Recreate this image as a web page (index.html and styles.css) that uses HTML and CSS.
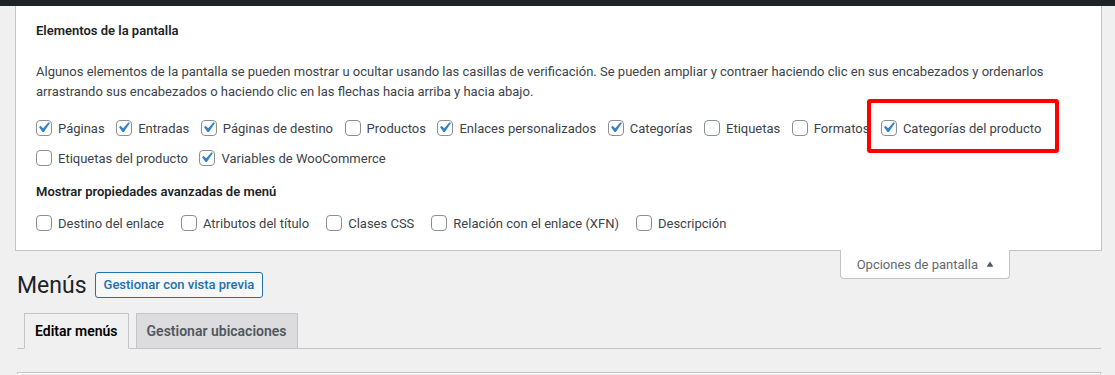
FILE: index.html
```html
<!DOCTYPE html>
<html lang="es">
<head>
    <meta charset="UTF-8">
    <meta name="viewport" content="width=device-width, initial-scale=1.0">
    <title>Menús</title>
    <link rel="stylesheet" href="styles.css">
</head>
<body>
    <div class="adminbar"></div>

    <!-- Screen options panel -->
    <div class="screen-options">
        <h5 class="prefs-title">Elementos de la pantalla</h5>
        <p class="prefs-help">Algunos elementos de la pantalla se pueden mostrar u ocultar usando las casillas de verificación. Se pueden ampliar y contraer haciendo clic en sus encabezados y ordenarlos arrastrando sus encabezados o haciendo clic en las flechas hacia arriba y hacia abajo.</p>

        <div class="prefs">
            <label><span class="cb checked"><svg viewBox="0 0 20 20"><path d="M14.83 4.89l1.34.94-5.81 8.38H9.02L5.78 9.67l1.34-1.25 2.57 2.4z"/></svg></span>Páginas</label>
            <label><span class="cb checked"><svg viewBox="0 0 20 20"><path d="M14.83 4.89l1.34.94-5.81 8.38H9.02L5.78 9.67l1.34-1.25 2.57 2.4z"/></svg></span>Entradas</label>
            <label><span class="cb checked"><svg viewBox="0 0 20 20"><path d="M14.83 4.89l1.34.94-5.81 8.38H9.02L5.78 9.67l1.34-1.25 2.57 2.4z"/></svg></span>Páginas de destino</label>
            <label><span class="cb"></span>Productos</label>
            <label><span class="cb checked"><svg viewBox="0 0 20 20"><path d="M14.83 4.89l1.34.94-5.81 8.38H9.02L5.78 9.67l1.34-1.25 2.57 2.4z"/></svg></span>Enlaces personalizados</label>
            <label><span class="cb checked"><svg viewBox="0 0 20 20"><path d="M14.83 4.89l1.34.94-5.81 8.38H9.02L5.78 9.67l1.34-1.25 2.57 2.4z"/></svg></span>Categorías</label>
            <label><span class="cb"></span>Etiquetas</label>
            <label><span class="cb"></span>Formatos</label>
            <label><span class="cb checked"><svg viewBox="0 0 20 20"><path d="M14.83 4.89l1.34.94-5.81 8.38H9.02L5.78 9.67l1.34-1.25 2.57 2.4z"/></svg></span>Categorías del producto</label>
            <label><span class="cb"></span>Etiquetas del producto</label>
            <label><span class="cb checked"><svg viewBox="0 0 20 20"><path d="M14.83 4.89l1.34.94-5.81 8.38H9.02L5.78 9.67l1.34-1.25 2.57 2.4z"/></svg></span>Variables de WooCommerce</label>
        </div>

        <h5 class="prefs-title advanced">Mostrar propiedades avanzadas de menú</h5>
        <div class="prefs advanced-prefs">
            <label><span class="cb"></span>Destino del enlace</label>
            <label><span class="cb"></span>Atributos del título</label>
            <label><span class="cb"></span>Clases CSS</label>
            <label><span class="cb"></span>Relación con el enlace (XFN)</label>
            <label><span class="cb"></span>Descripción</label>
        </div>
    </div>

    <div class="wrap">
        <div class="page-head">
            <div class="title-row">
                <h1>Menús</h1>
                <a class="page-title-action" href="#">Gestionar con vista previa</a>
            </div>
            <button class="show-settings" type="button">Opciones de pantalla
                <svg class="arrow" viewBox="0 0 10 8"><path d="M5 0.5L9.5 7.5H0.5z"/></svg>
            </button>
        </div>

        <div class="nav-tabs">
            <a class="nav-tab active" href="#">Editar menús</a>
            <a class="nav-tab" href="#">Gestionar ubicaciones</a>
        </div>

        <div class="menu-box"></div>
    </div>

    <!-- annotation -->
    <div class="highlight"></div>
</body>
</html>
```
FILE: styles.css
```css
body {
    font-family: Roboto, "Liberation Sans", sans-serif;
    font-size: 13px;
    color: #3c434a;
    background-color: #f0f0f1;
    margin: 0;
}

.adminbar {
    height: 6px;
    background-color: #1d2327;
}

.screen-options {
    background-color: white;
    border: 1px solid #c3c4c7;
    border-top: none;
    margin: 0 13px 0 15px;
    padding: 15px 20px 12px 20px;
}

.prefs-title {
    margin: 0 0 21px 0;
    font-size: 13px;
    font-weight: 600;
    line-height: 20px;
    color: #1d2327;
}

.prefs-title.advanced {
    margin: 9px 0 6px 0;
}

.prefs-help {
    margin: 0 0 12px 0;
    line-height: 19.5px;
}

.prefs {
    display: flex;
    flex-wrap: wrap;
}

.prefs label {
    display: inline-flex;
    align-items: center;
    gap: 6px;
    height: 30px;
    margin-right: 11.5px;
    cursor: pointer;
}

.advanced-prefs label {
    margin-right: 17px;
}

.cb {
    width: 16px;
    height: 16px;
    box-sizing: border-box;
    border: 1px solid #8c8f94;
    border-radius: 4px;
    background-color: white;
    position: relative;
}

.cb svg {
    position: absolute;
    left: -4px;
    top: -4px;
    width: 21px;
    height: 21px;
    fill: #3582c4;
}

.wrap {
    margin: 0 14px 0 17px;
}

.page-head {
    display: flex;
    justify-content: space-between;
    align-items: flex-start;
}

.title-row {
    display: flex;
    align-items: center;
    margin-top: 20px;
}

h1 {
    margin: 0 8px 0 0;
    font-size: 23px;
    font-weight: 400;
    line-height: 30px;
    color: #1d2327;
}

.page-title-action {
    display: inline-block;
    padding: 4px 8px;
    line-height: 16px;
    font-size: 13px;
    font-weight: 500;
    color: #2271b1;
    background-color: #f6f7f7;
    border: 1px solid #2271b1;
    border-radius: 3px;
    text-decoration: none;
    margin-top: -2px;
}

.show-settings {
    margin: -1px 91px 0 0;
    height: 29px;
    padding: 0 15px 0 16px;
    font-family: inherit;
    font-size: 13px;
    color: #646970;
    background-color: white;
    border: 1px solid #c3c4c7;
    border-top: none;
    border-radius: 0 0 4px 4px;
    display: flex;
    align-items: center;
    gap: 8px;
    cursor: pointer;
}

.arrow {
    width: 8px;
    height: 6px;
    fill: #50575e;
}

.nav-tabs {
    display: flex;
    margin-top: 12px;
    border-bottom: 1px solid #c3c4c7;
}

.nav-tab {
    margin-left: 7px;
    padding: 5px 10px;
    font-size: 14px;
    font-weight: 600;
    line-height: 24px;
    color: #50575e;
    background-color: #dcdcde;
    border: 1px solid #c3c4c7;
    margin-bottom: -1px;
    text-decoration: none;
}

.nav-tab.active {
    color: #000;
    background-color: #f0f0f1;
    border-bottom-color: #f0f0f1;
}

.menu-box {
    margin-top: 23px;
    height: 1px;
    background-color: white;
    border: 1px solid #c3c4c7;
    border-bottom: none;
}

.highlight {
    position: absolute;
    left: 867px;
    top: 99px;
    width: 192px;
    height: 54px;
    box-sizing: border-box;
    border: 4px solid #ff0000;
    border-radius: 3px;
}
```
